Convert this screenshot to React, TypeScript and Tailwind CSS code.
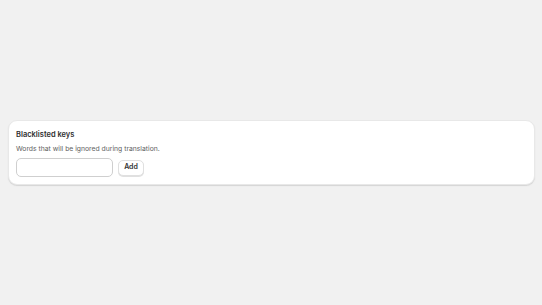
export default function App() {
  return (
    <div className="min-h-screen bg-[#f1f1f1] flex flex-col justify-center pl-2 pr-[7px] font-[Inter,sans-serif] text-[#303030]">
      <div className="bg-white rounded-[9px] shadow-[0_1px_0_0_rgba(26,26,26,0.07),0_1px_2px_0_rgba(0,0,0,0.06)] border border-[#e8e8e8] px-[7px] pt-[8px] pb-[7px]">
        <h2 className="text-[7.5px] leading-[11px] font-semibold">Blacklisted keys</h2>
        <p className="mt-[3px] text-[6.8px] leading-[11px] text-[#616161]">
          Words that will be ignored during translation.
        </p>
        <div className="mt-[4px] flex items-center gap-[5px]">
          <input
            type="text"
            className="w-[97px] h-[19px] rounded-[5px] border border-[#cfcfcf] bg-white px-1 text-[7px] outline-none"
          />
          <button
            type="button"
            className="h-[16px] w-[26px] rounded-[5px] border border-[#e0e0e0] bg-white text-[7px] font-semibold text-[#303030] shadow-[0_1px_0_0_rgba(0,0,0,0.12)]"
          >
            Add
          </button>
        </div>
      </div>
    </div>
  );
}
